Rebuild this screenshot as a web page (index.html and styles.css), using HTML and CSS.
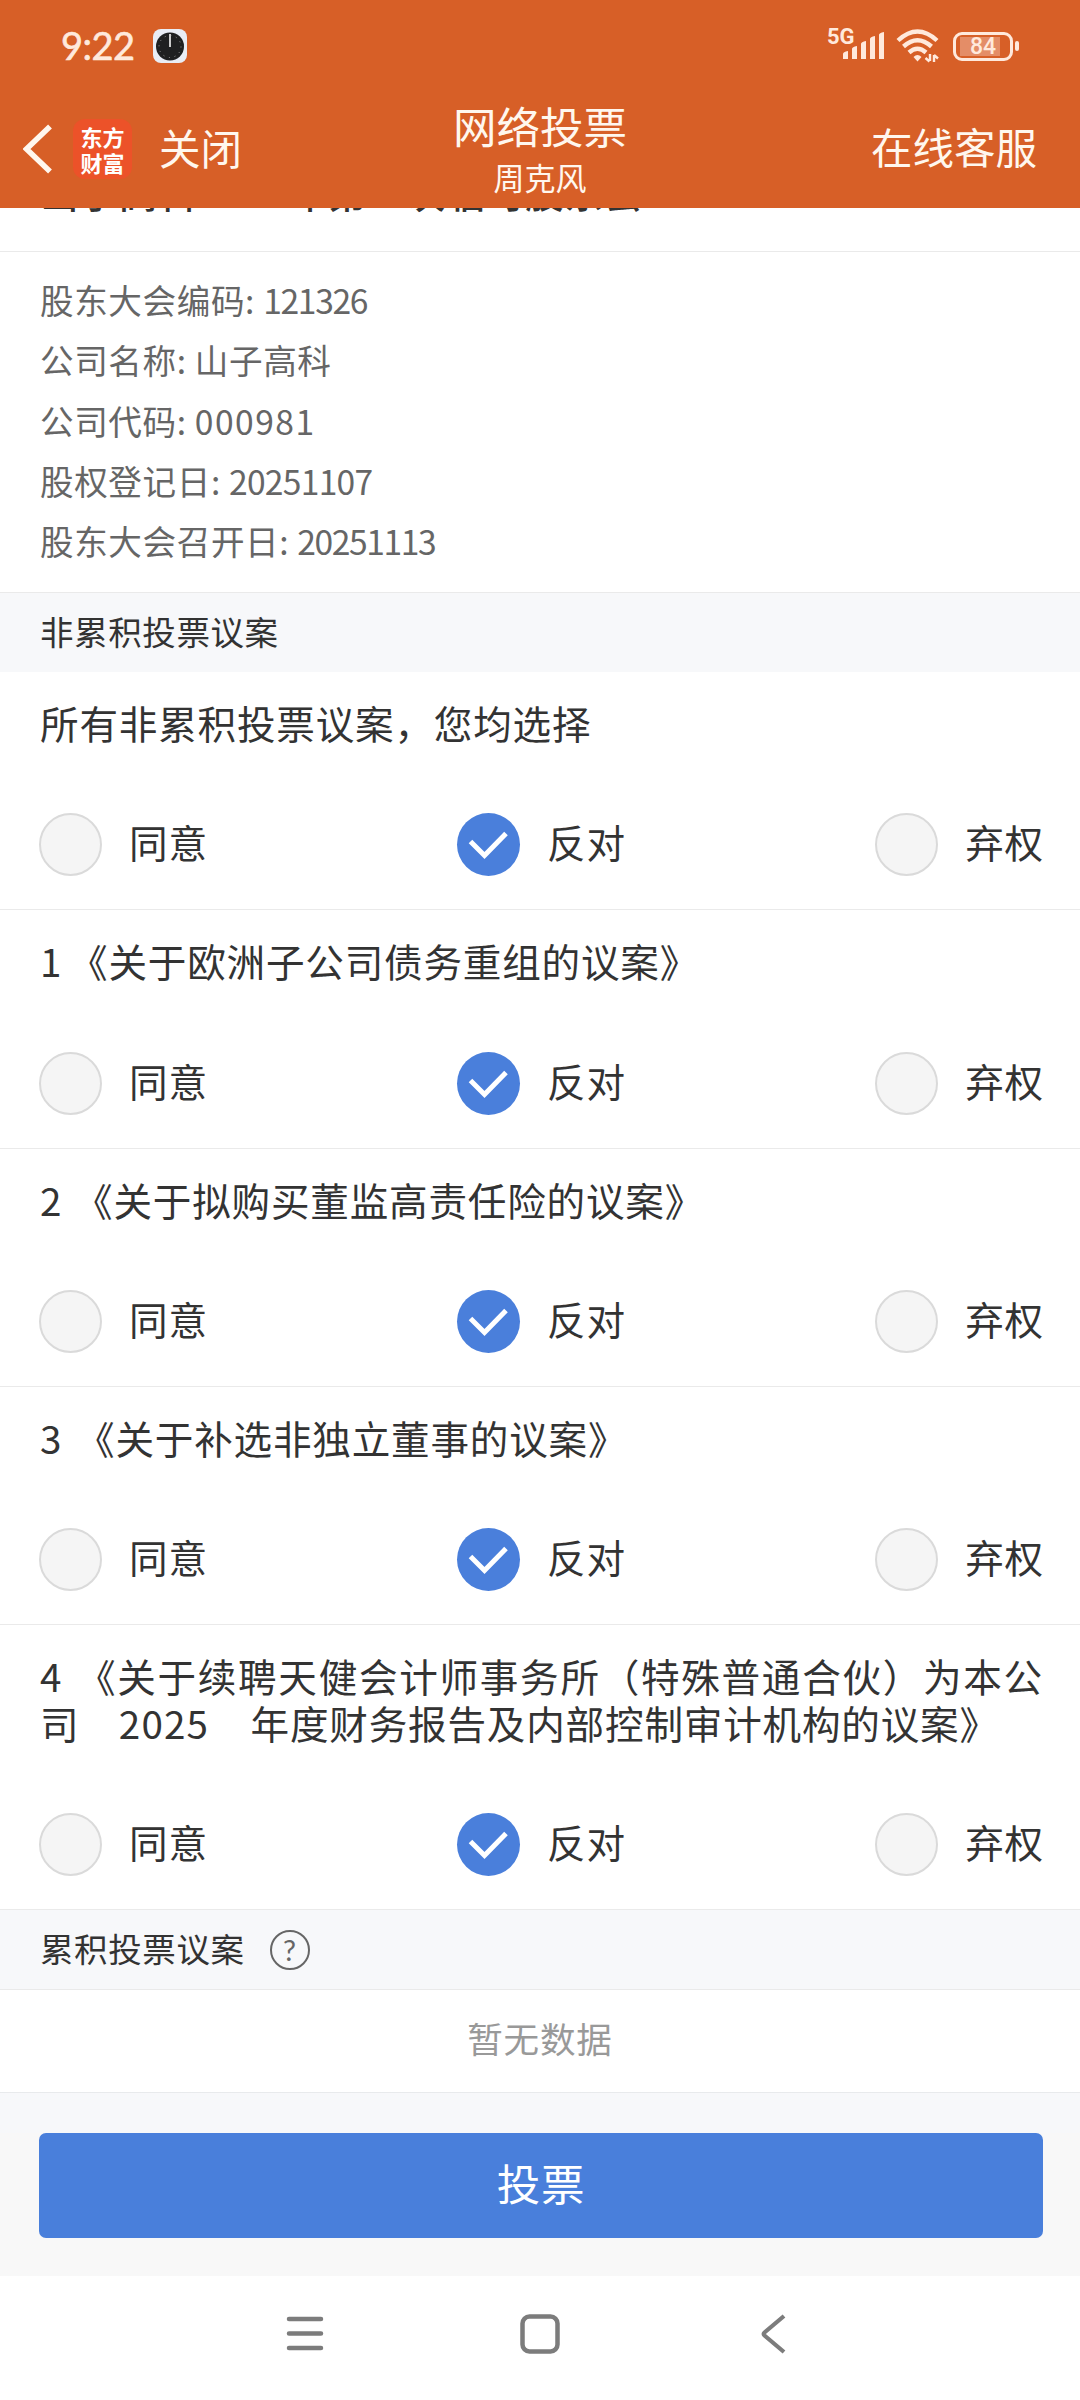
FILE: index.html
```html
<!DOCTYPE html>
<html lang="zh-CN">
    <head>
        <meta charset="utf-8">
        <title>网络投票</title>
        <link rel="stylesheet" href="styles.css">
    </head>
    <body>
        <svg class="defs" width="0" height="0">
            <symbol id="check" viewBox="0 0 63 63">
                <path d="M13.500 28.500L27.500 42.500L49 20.500" fill="none" stroke="#fff" stroke-width="5"/>
            </symbol>
        </svg>
        <header class="header">
            <div class="status">
                <span class="time">9:22</span>
                <svg class="clock" width="34" height="34" viewBox="0 0 34 34">
                    <rect width="34" height="34" rx="8" fill="#e9edf5"/>
                    <circle cx="17" cy="17.500" r="14" fill="#1f2021"/>
                    <circle cx="17" cy="17.500" r="11" fill="none" stroke="#999" stroke-width="1" stroke-dasharray="1 4.760"/>
                    <path d="M17 5v13" stroke="#ccc" stroke-width="2"/>
                </svg>
                <div class="signals">
                    <span class="net">5G</span>
                    <svg class="bars" width="42" height="28" viewBox="0 0 42 28">
                        <path d="M0 27v-5q0-2 5-3v8zM9 27V17q0-2 5-3v13zM18 27V12q0-2 5-3v18zM27 27V7q0-2 5-3v23zM36 27V3q0-2 5-3v27z" fill="#ffe9dc"/>
                    </svg>
                    <svg class="wifi" width="44" height="34" viewBox="0 0 44 34">
                        <g fill="none" stroke="#ffe9dc" stroke-width="4.400">
                            <path d="M2 11.500q19.500-18 39 0"/>
                            <path d="M7.500 17.500q14-12.500 28 0"/>
                            <path d="M13 23.500q8.500-7.500 17 0"/>
                        </g>
                        <path d="M17.500 28q4-4 8 0l-4 4.500z" fill="#ffe9dc"/>
                        <path d="M34 25v7M29.500 29l4 3.500M38 33v-7M38 26l4 3.500" stroke="#ffe9dc" stroke-width="2.400" fill="none"/>
                    </svg>
                    <div class="battery"><span class="level"></span><span class="percent">84</span></div>
                    <span class="nub"></span>
                </div>
            </div>
            <div class="navbar">
                <div class="left">
                    <svg class="back" width="30" height="50" viewBox="0 0 30 50">
                        <path d="M27 2.500L3.500 25L27 47.500" fill="none" stroke="#fff7ee" stroke-width="5.500"/>
                    </svg>
                    <div class="logo">东方<br>财富</div>
                    <span class="close">关闭</span>
                </div>
                <div class="center">
                    <div class="page-title">网络投票</div>
                    <div class="user">周克风</div>
                </div>
                <div class="right">在线客服</div>
            </div>
        </header>
        <main>
            <div class="meeting">山子高科2025年第一次临时股东会</div>
            <div class="info">
                <div>股东大会编码: <span class="n1">121326</span></div>
                <div>公司名称: 山子高科</div>
                <div>公司代码: <span class="n2">000981</span></div>
                <div>股权登记日: <span class="n3">20251107</span></div>
                <div>股东大会召开日: <span class="n4">20251113</span></div>
            </div>
            <div class="section">非累积投票议案</div>
            <div class="item">
                <div class="title">所有非累积投票议案，您均选择</div>
                <div class="options">
                    <div class="option"><i class="radio"></i>同意</div>
                    <div class="option"><i class="radio on"><svg><use href="#check"/></svg></i>反对</div>
                    <div class="option"><i class="radio"></i>弃权</div>
                </div>
            </div>
            <div class="item">
                <div class="title"><span class="no no1">1</span>《关于欧洲子公司债务重组的议案》</div>
                <div class="options">
                    <div class="option"><i class="radio"></i>同意</div>
                    <div class="option"><i class="radio on"><svg><use href="#check"/></svg></i>反对</div>
                    <div class="option"><i class="radio"></i>弃权</div>
                </div>
            </div>
            <div class="item">
                <div class="title"><span class="no no2">2</span>《关于拟购买董监高责任险的议案》</div>
                <div class="options">
                    <div class="option"><i class="radio"></i>同意</div>
                    <div class="option"><i class="radio on"><svg><use href="#check"/></svg></i>反对</div>
                    <div class="option"><i class="radio"></i>弃权</div>
                </div>
            </div>
            <div class="item">
                <div class="title"><span class="no no3">3</span>《关于补选非独立董事的议案》</div>
                <div class="options">
                    <div class="option"><i class="radio"></i>同意</div>
                    <div class="option"><i class="radio on"><svg><use href="#check"/></svg></i>反对</div>
                    <div class="option"><i class="radio"></i>弃权</div>
                </div>
            </div>
            <div class="item">
                <div class="title"><span class="no no4">4</span>《关于续聘天健会计师事务所（特殊普通合伙）为本公司　<span class="year">2025</span>　年度财务报告及内部控制审计机构的议案》</div>
                <div class="options">
                    <div class="option"><i class="radio"></i>同意</div>
                    <div class="option"><i class="radio on"><svg><use href="#check"/></svg></i>反对</div>
                    <div class="option"><i class="radio"></i>弃权</div>
                </div>
            </div>
            <div class="section last">累积投票议案<span class="help">?</span></div>
            <div class="empty">暂无数据</div>
        </main>
        <div class="submit-bar">
            <div class="submit">投票</div>
        </div>
        <footer class="sysnav">
            <svg width="42" height="42" viewBox="0 0 42 42">
                <path d="M5 6h32M5 20.500h32M5 35h32" stroke="#7c7c7c" stroke-width="4.500" stroke-linecap="round"/>
            </svg>
            <svg width="42" height="42" viewBox="0 0 42 42">
                <rect x="3.500" y="3.500" width="35" height="35" rx="7" fill="none" stroke="#7c7c7c" stroke-width="4.500"/>
            </svg>
            <svg width="42" height="42" viewBox="0 0 42 42">
                <path d="M30 3L10.500 19.500q-1.500 1.500 0 3L30 39" fill="none" stroke="#7c7c7c" stroke-width="4.200"/>
            </svg>
        </footer>
    </body>
</html>
```
FILE: styles.css
```css
* {
    box-sizing: border-box;
}
body {
    width: 1080px;
    height: 2400px;
    margin: 0;
    overflow: hidden;
    display: flex;
    flex-direction: column;
    background: #f7f8fa;
    color: #333;
    font-family: "Noto Sans CJK SC", sans-serif;
    font-size: 38.600px;
    letter-spacing: 0.800px;
}
svg {
    display: block;
    flex: none;
}
.defs {
    position: absolute;
}
.header {
    position: relative;
    z-index: 1;
    flex: none;
    height: 208px;
    background: #d75f27;
    color: #fff7ee;
    letter-spacing: 0;
}
.status {
    display: flex;
    height: 92px;
    padding: 0 61px;
    align-items: center;
    color: #ffe9dc;
}
.time {
    width: 92px;
    margin-top: -2px;
    font-family: Lato, sans-serif;
    font-size: 38px;
    letter-spacing: -0.5px;
    -webkit-text-stroke: 0.6px #ffe9dc;
}
.signals {
    display: flex;
    align-items: center;
    margin-left: auto;
}
.net {
    width: 16px;
    margin-top: -18px;
    font-family: Roboto, sans-serif;
    font-size: 22px;
    font-weight: bold;
    line-height: 20px;
}
.wifi {
    margin-left: 11px;
}
.battery {
    position: relative;
    width: 60px;
    height: 29px;
    margin-left: 13px;
    border: 3px solid #ffe9dc;
    border-radius: 9px;
    text-align: center;
    font-family: Roboto, sans-serif;
    font-size: 23px;
    font-weight: 500;
    line-height: 24px;
}
.level {
    position: absolute;
    left: 4px;
    top: 2px;
    width: 40px;
    height: 19px;
    background: #e48d67;
}
.percent {
    position: relative;
}
.nub {
    width: 4px;
    height: 10px;
    margin-left: 2px;
    border-radius: 2px;
    background: #ffe9dc;
}
.navbar {
    display: grid;
    grid-template-columns: 1fr auto 1fr;
    height: 116px;
    padding: 0 23px;
}
.left {
    display: flex;
    align-items: center;
    height: 114px;
}
.logo {
    width: 59px;
    height: 60px;
    margin: 0 27px 0 20px;
    padding-top: 4px;
    border-radius: 12px;
    background: #ec5229;
    color: #fff;
    text-align: center;
    font-size: 22px;
    font-weight: bold;
    line-height: 26px;
}
.close,
.right {
    font-size: 41.500px;
    line-height: 110px;
}
.close {
    margin-top: -4px;
}
.right {
    margin-top: -1px;
    padding-right: 20px;
    text-align: right;
}
.center {
    text-align: center;
}
.page-title {
    margin-top: 9px;
    font-size: 43.500px;
    line-height: 50px;
}
.user {
    margin-top: 7px;
    font-size: 31px;
    line-height: 38px;
}
main {
    flex: none;
    background: #fff;
}
.meeting {
    height: 84px;
    margin-top: -40px;
    padding-left: 40px;
    border-bottom: 1px solid #eaeaea;
    font-weight: 500;
    line-height: 47px;
}
.info {
    height: 341px;
    padding: 18px 40px 0;
    border-bottom: 1px solid #eaeaea;
    color: #666;
    font-size: 33.600px;
    letter-spacing: 0.600px;
    line-height: 60.300px;
}
.n1 {
    letter-spacing: -1.300px;
}
.n2 {
    letter-spacing: 1.500px;
}
.n3 {
    letter-spacing: -0.700px;
}
.n4 {
    letter-spacing: -1.400px;
}
.section {
    display: flex;
    height: 79px;
    padding: 0 0 4px 40px;
    align-items: center;
    background: #f7f8fa;
    font-size: 33.500px;
    letter-spacing: 0.600px;
    line-height: 40px;
}
.last {
    height: 80px;
    border-bottom: 1px solid #eaeaea;
}
.help {
    width: 40px;
    height: 40px;
    margin: 4px 0 0 25px;
    border: 2px solid #666;
    border-radius: 50%;
    color: #666;
    text-align: center;
    font-family: Lato, sans-serif;
    font-size: 29px;
    letter-spacing: 0;
    line-height: 36px;
}
.item {
    padding: 27px 40px 33px;
    border-bottom: 1px solid #eaeaea;
}
.title {
    margin-right: -3px;
    text-align: justify;
    line-height: 46.800px;
}
.no {
    display: inline-block;
}
.no1 {
    width: 29px;
}
.no2 {
    width: 34px;
}
.no3 {
    width: 36px;
}
.no4 {
    width: 36px;
}
.year {
    margin-right: 2px;
    letter-spacing: 1.200px;
}
.options {
    display: flex;
    justify-content: space-between;
    margin: 67.500px -4px 0 -1px;
}
.option {
    display: flex;
    height: 63px;
    line-height: 57px;
}
.radio {
    width: 63px;
    height: 63px;
    margin-right: 27px;
    border: 2px solid #dadada;
    border-radius: 50%;
    background: #f5f5f5;
}
.on {
    border: 0;
    background: #4a7fdb;
}
.on svg {
    width: 63px;
    height: 63px;
}
.empty {
    height: 103px;
    border-bottom: 1px solid #e8eaec;
    color: #999;
    text-align: center;
    font-size: 35.600px;
    line-height: 95px;
}
.submit-bar {
    flex: none;
    height: 143px;
    margin-top: auto;
    padding: 0 37px 0 39px;
    background: #f8f8f8;
}
.submit {
    height: 105px;
    border-radius: 7px;
    background: #497fdb;
    color: #fff;
    text-align: center;
    font-size: 43.500px;
    line-height: 100px;
}
.sysnav {
    display: flex;
    flex: none;
    height: 124px;
    padding: 37px 284px 0;
    justify-content: space-between;
    background: #fff;
}
```
